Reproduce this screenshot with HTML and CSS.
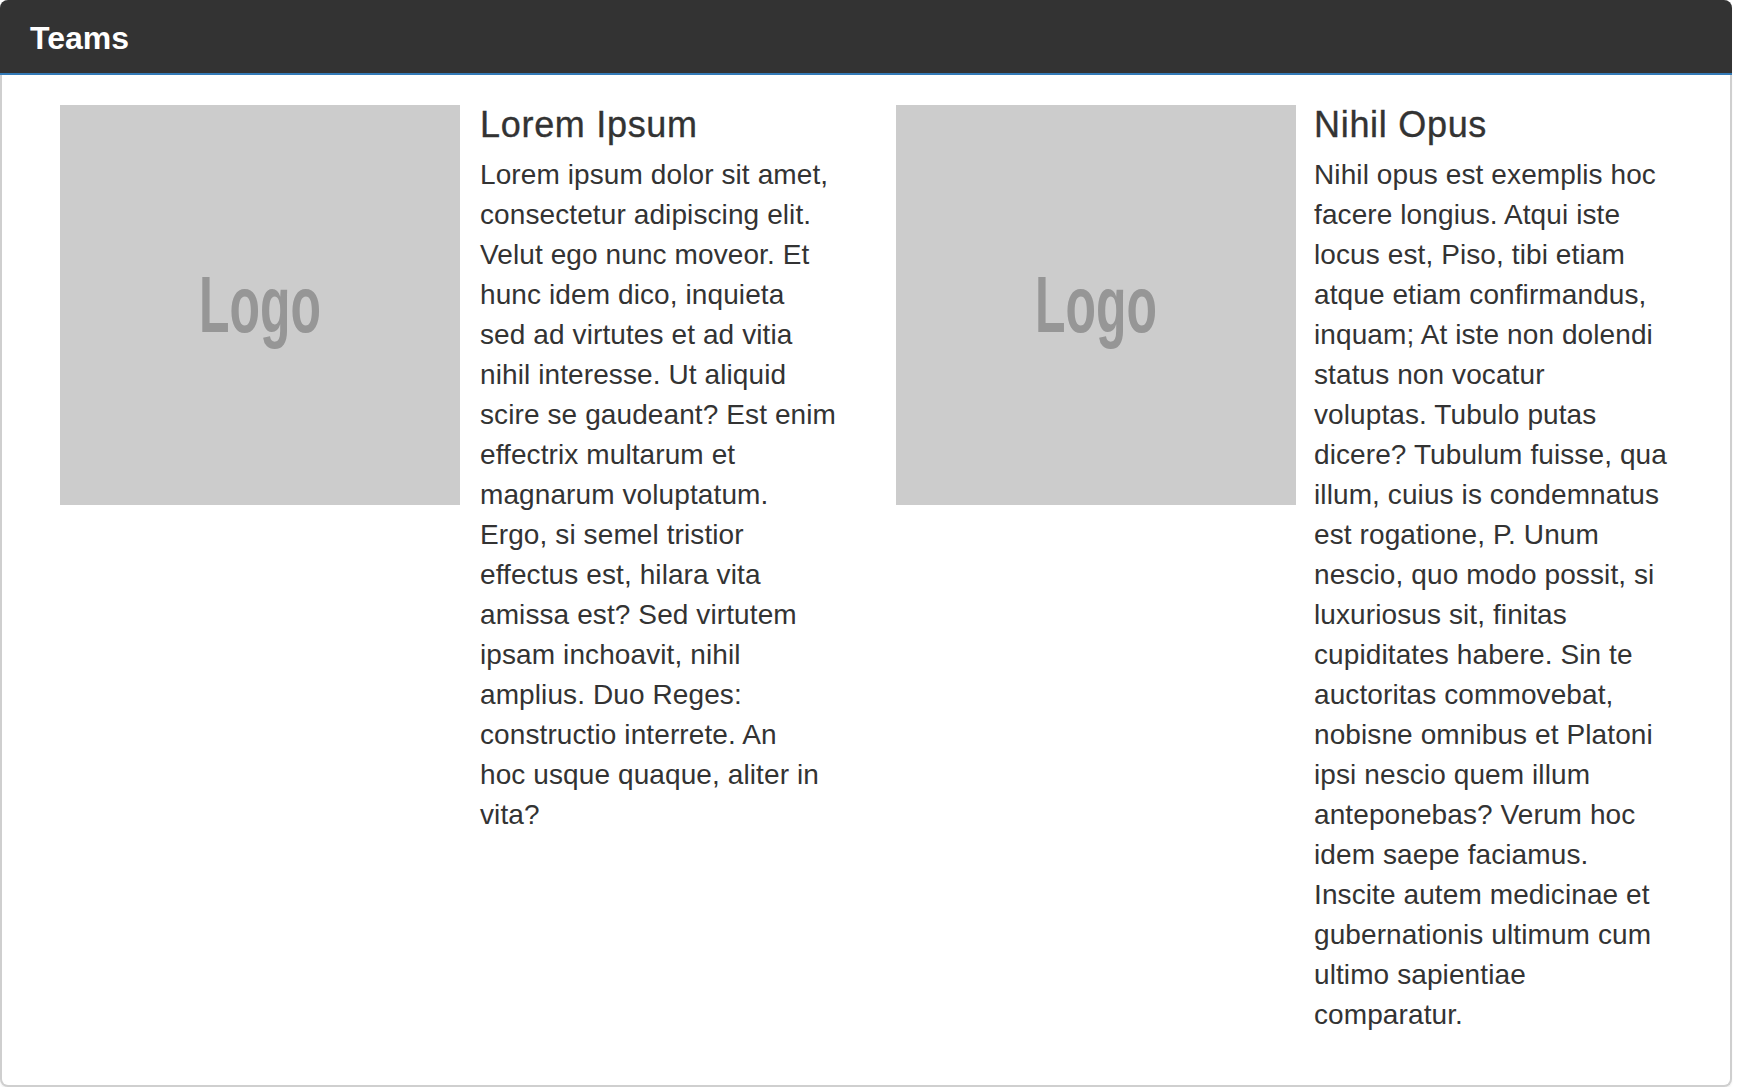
FILE: index.html
```html
<!DOCTYPE html>
<html lang="en">
<head>
<meta charset="utf-8">
<title>Teams</title>
<link rel="stylesheet" href="styles.css">
</head>
<body>
<div class="panel">
  <div class="panel-heading">
    <h3 class="panel-title">Teams</h3>
  </div>
  <div class="panel-body">
    <div class="teams">
      <div class="team">
        <div class="logo">
          <svg width="400" height="400" viewBox="0 0 400 400" xmlns="http://www.w3.org/2000/svg">
            <rect width="400" height="400" fill="#cccccc"/>
            <text x="200" y="227" text-anchor="middle" font-family="Liberation Sans, Arial, sans-serif" font-weight="bold" font-size="79" fill="#969696" textLength="122" lengthAdjust="spacingAndGlyphs">Logo</text>
          </svg>
        </div>
        <div class="team-body">
          <h4 class="team-name">Lorem Ipsum</h4>
          <p class="team-text">Lorem ipsum dolor sit amet,<br>
consectetur adipiscing elit.<br>
Velut ego nunc moveor. Et<br>
hunc idem dico, inquieta<br>
sed ad virtutes et ad vitia<br>
nihil interesse. Ut aliquid<br>
scire se gaudeant? Est enim<br>
effectrix multarum et<br>
magnarum voluptatum.<br>
Ergo, si semel tristior<br>
effectus est, hilara vita<br>
amissa est? Sed virtutem<br>
ipsam inchoavit, nihil<br>
amplius. Duo Reges:<br>
constructio interrete. An<br>
hoc usque quaque, aliter in<br>
vita?</p>
        </div>
      </div>
      <div class="team">
        <div class="logo">
          <svg width="400" height="400" viewBox="0 0 400 400" xmlns="http://www.w3.org/2000/svg">
            <rect width="400" height="400" fill="#cccccc"/>
            <text x="200" y="227" text-anchor="middle" font-family="Liberation Sans, Arial, sans-serif" font-weight="bold" font-size="79" fill="#969696" textLength="122" lengthAdjust="spacingAndGlyphs">Logo</text>
          </svg>
        </div>
        <div class="team-body team-body-right">
          <h4 class="team-name">Nihil Opus</h4>
          <p class="team-text">Nihil opus est exemplis hoc<br>
facere longius. Atqui iste<br>
locus est, Piso, tibi etiam<br>
atque etiam confirmandus,<br>
inquam; At iste non dolendi<br>
status non vocatur<br>
voluptas. Tubulo putas<br>
dicere? Tubulum fuisse, qua<br>
illum, cuius is condemnatus<br>
est rogatione, P. Unum<br>
nescio, quo modo possit, si<br>
luxuriosus sit, finitas<br>
cupiditates habere. Sin te<br>
auctoritas commovebat,<br>
nobisne omnibus et Platoni<br>
ipsi nescio quem illum<br>
anteponebas? Verum hoc<br>
idem saepe faciamus.<br>
Inscite autem medicinae et<br>
gubernationis ultimum cum<br>
ultimo sapientiae<br>
comparatur.</p>
        </div>
      </div>
    </div>
  </div>
</div>
</body>
</html>
```
FILE: styles.css
```css
html, body {
  margin: 0;
  padding: 0;
  background: #ffffff;
}

body {
  font-family: "Liberation Sans", Arial, Helvetica, sans-serif;
  font-size: 28px;
  line-height: 40px;
  color: #333333;
}

.panel {
  box-sizing: border-box;
  width: 1732px;
  border: 2px solid #cfcfcf;
  border-top: 0;
  border-radius: 8px;
  background: #ffffff;
  box-shadow: 0 2px 2px rgba(0, 0, 0, 0.06);
}

.panel-heading {
  margin: 0 -2px;
  padding: 21px 30px 17px;
  background: #333333;
  border-bottom: 2px solid #337ab7;
  border-radius: 8px 8px 0 0;
}

.panel-title {
  margin: 0;
  font-size: 32px;
  line-height: 35px;
  font-weight: bold;
  color: #ffffff;
}

.panel-body {
  padding: 30px 28px;
}

.teams {
  display: grid;
  grid-template-columns: repeat(2, minmax(0, 1fr));
}

.team {
  display: flex;
  align-items: flex-start;
  padding: 0 30px;
  min-width: 0;
}

.logo {
  flex: 0 0 400px;
  width: 400px;
  height: 400px;
  margin-right: 20px;
}

.logo svg {
  display: block;
}

.team-body {
  flex: 1 1 auto;
  min-width: 0;
}

.team-body-right {
  margin-left: -2px;
}

.team-name {
  margin: 0 0 10px;
  font-size: 36px;
  line-height: 40px;
  font-weight: normal;
  letter-spacing: 0.7px;
  -webkit-text-stroke: 0.35px #333333;
  color: #333333;
}

.team-text {
  margin: 0 0 20px;
  letter-spacing: 0.1px;
  white-space: nowrap;
}
```
